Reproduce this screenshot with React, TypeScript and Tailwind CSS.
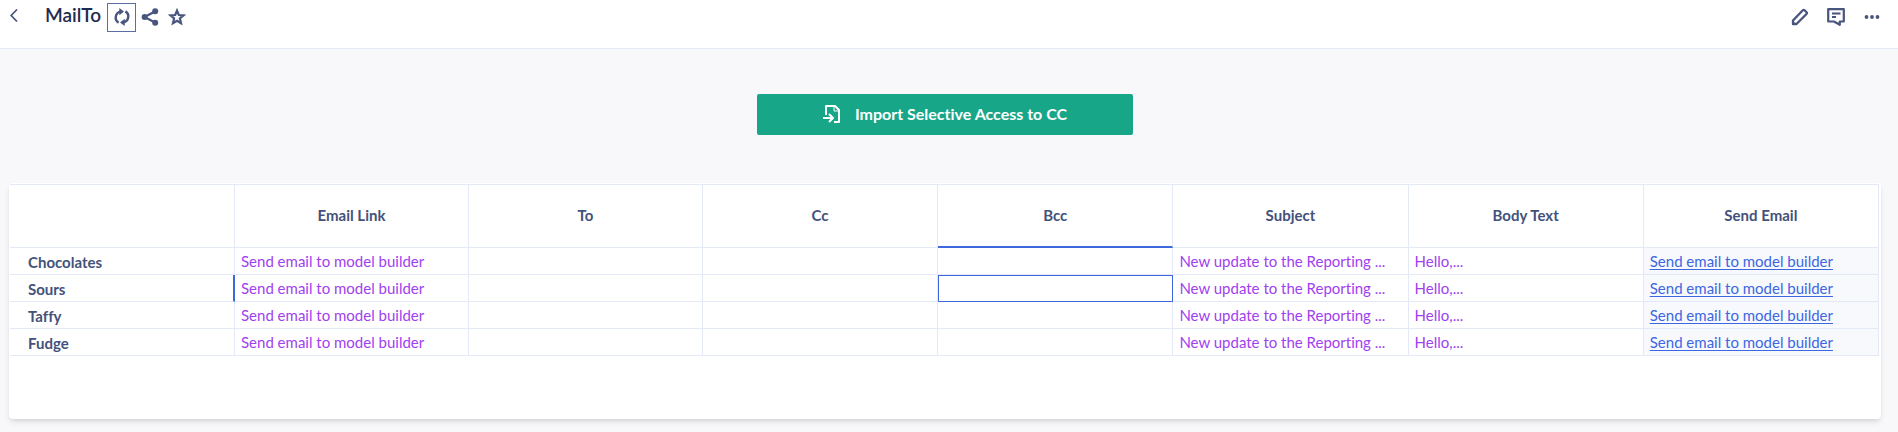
const columns = ["Email Link", "To", "Cc", "Bcc", "Subject", "Body Text", "Send Email"];

const rows = ["Chocolates", "Sours", "Taffy", "Fudge"].map((name) => ({
  name,
  values: [
    "Send email to model builder",
    "",
    "",
    "",
    "New update to the Reporting ...",
    "Hello,...",
    "Send email to model builder",
  ],
}));

const selected = { row: 1, column: 3 };

function PageHeader() {
  return (
    <header className="border-b border-[#e3e9f6] bg-white pr-2 pb-3.5 text-[#48557d]">
      <div className="flex h-[34px] items-center">
        <button aria-label="Back" className="flex w-7 justify-center pb-1">
          <svg width="8" height="13" viewBox="0 0 8 13" fill="none" stroke="currentColor" strokeWidth="1.7">
            <path d="M7 0.5 1.2 6.5 7 12.5" />
          </svg>
        </button>

        <h1 className="ml-[17px] w-[58px] pb-1 text-[19px] font-semibold text-[#1f2c4f]">MailTo</h1>

        <button
          aria-label="Refresh"
          className="ml-1 flex size-[29px] items-center justify-center border border-[#5b6da3]"
        >
          <svg width="18" height="18" viewBox="0 0 18 18" fill="none" stroke="currentColor" strokeWidth="2.4">
            <path d="M5.6 14.6A6 6 0 0 1 7.5 3.6" />
            <path d="M12.4 3.4A6 6 0 0 1 10.5 14.4" />
            <path d="M6.3 0v7.2L11 3.6Z" fill="currentColor" stroke="none" />
            <path d="M11.7 18v-7.2L7 14.4Z" fill="currentColor" stroke="none" />
          </svg>
        </button>
        <button aria-label="Share" className="flex w-[27px] justify-center">
          <svg width="18" height="18" viewBox="0 0 18 18" fill="currentColor" stroke="currentColor">
            <path d="M14 3.5 3.5 9 14 14.5" fill="none" strokeWidth="2.2" />
            <circle cx="14.2" cy="3.3" r="3" stroke="none" />
            <circle cx="3.6" cy="9" r="3" stroke="none" />
            <circle cx="14.2" cy="14.7" r="3" stroke="none" />
          </svg>
        </button>
        <button aria-label="Favorite" className="flex w-[27px] justify-center">
          <svg width="18" height="18" viewBox="0 0 18 18" fill="none" stroke="currentColor" strokeWidth="2.2">
            <path d="M9 2.6 10.8 7l4.7.4-3.6 3.1 1.1 4.6-4-2.4-4 2.4 1.1-4.6L2.5 7.4 7.2 7Z" />
          </svg>
        </button>

        <div className="ml-auto flex">
          <button aria-label="Edit" className="flex w-9 items-center justify-center">
            <svg width="18" height="18" viewBox="0 0 18 18" fill="none" stroke="currentColor" strokeWidth="2.3" strokeLinejoin="round">
              <path d="M2 16v-3.5L11.8 2.3q.9-.9 1.8 0l1.9 1.9q.9.9 0 1.8L5.5 16Z" />
              <path d="M1 12v5h5Z" fill="currentColor" stroke="none" />
            </svg>
          </button>
          <button aria-label="Comments" className="flex w-9 items-center justify-center">
            <svg width="18" height="18" viewBox="0 0 18 18" fill="none" stroke="currentColor" strokeWidth="2.2" strokeLinejoin="round">
              <path d="M1.2 1.2h15.6v12.3h-4v3.3L7 13.5H1.2Z" />
              <path d="M5 5.5h8.5M5 9h4" strokeWidth="1.8" />
            </svg>
          </button>
          <button aria-label="More" className="flex w-9 items-center justify-center">
            <svg width="16" height="18" viewBox="0 0 16 18" fill="currentColor">
              <circle cx="2.5" cy="9" r="1.9" />
              <circle cx="8" cy="9" r="1.9" />
              <circle cx="13.5" cy="9" r="1.9" />
            </svg>
          </button>
        </div>
      </div>
    </header>
  );
}

function cellClass(row: number, column: number) {
  if (row === selected.row && column === selected.column) {
    return "border border-[#3e68e0]";
  }
  if (column === columns.length - 1) {
    return "border-r border-b border-[#e3e9f6] bg-[#f8f9fd] text-[#3c66e2]";
  }
  return "border-r border-b border-[#e3e9f6] text-[#a041f0]";
}

function EmailGrid() {
  return (
    <table className="w-full table-fixed border-separate border-spacing-0 border-t border-[#e3e9f6] text-[15px] leading-5">
      <colgroup>
        <col className="w-[225px]" />
        <col className="w-[234px]" />
        <col className="w-[234px]" />
      </colgroup>
      <thead>
        <tr className="h-[63px] text-[#43527a]">
          <td className="border-r border-b border-[#e3e9f6]" />
          {columns.map((column, i) => (
            <th
              key={column}
              scope="col"
              className={
                i === selected.column
                  ? "border-r border-b-2 border-r-[#e3e9f6] border-b-[#3e68e0] px-0 pt-0 pb-0.5 font-bold"
                  : "border-r border-b border-[#e3e9f6] px-0 pt-0 pb-0.5 font-bold"
              }
            >
              {column}
            </th>
          ))}
        </tr>
      </thead>
      <tbody>
        {rows.map((row, r) => (
          <tr key={row.name} className="h-[27px]">
            <th
              scope="row"
              className={
                r === selected.row
                  ? "border-r-2 border-b border-r-[#3e68e0] border-b-[#e3e9f6] pt-0.5 pb-0 pl-[18px] text-left font-bold text-[#43527a]"
                  : "border-r border-b border-[#e3e9f6] pt-0.5 pb-0 pl-[18px] text-left font-bold text-[#43527a]"
              }
            >
              {row.name}
            </th>
            {row.values.map((value, c) => (
              <td key={c} className={`truncate py-0 pl-1.5 ${cellClass(r, c)}`}>
                {c === columns.length - 1 ? (
                  <a href="mailto:" className="underline underline-offset-2">
                    {value}
                  </a>
                ) : (
                  value
                )}
              </td>
            ))}
          </tr>
        ))}
      </tbody>
    </table>
  );
}

export default function App() {
  return (
    <div className="min-h-screen bg-[#f8f8fa] font-['Lato','Liberation_Sans',sans-serif] [font-variant-ligatures:none]">
      <PageHeader />

      <main className="pt-[45px] pr-[17px] pb-3.5 pl-[9px]">
        <button className="mx-auto flex h-[41px] w-[376px] items-center justify-center gap-3.5 rounded-xs bg-[#17a688] pb-0.5 text-base font-bold text-white">
          <svg width="18" height="18" viewBox="0 0 18 18" fill="none" stroke="currentColor" strokeWidth="2" strokeLinejoin="round">
            <path d="M3 10V1h9l4 4v12h-5" />
            <path d="M11 1v5h5" strokeWidth="1" />
            <path d="M0 13h9M6 9l4 4-4 4" />
          </svg>
          Import Selective Access to CC
        </button>

        <section className="mt-12 min-h-[236px] rounded-sm bg-white pt-px pr-0.5 pl-px shadow-md">
          <EmailGrid />
        </section>
      </main>
    </div>
  );
}
